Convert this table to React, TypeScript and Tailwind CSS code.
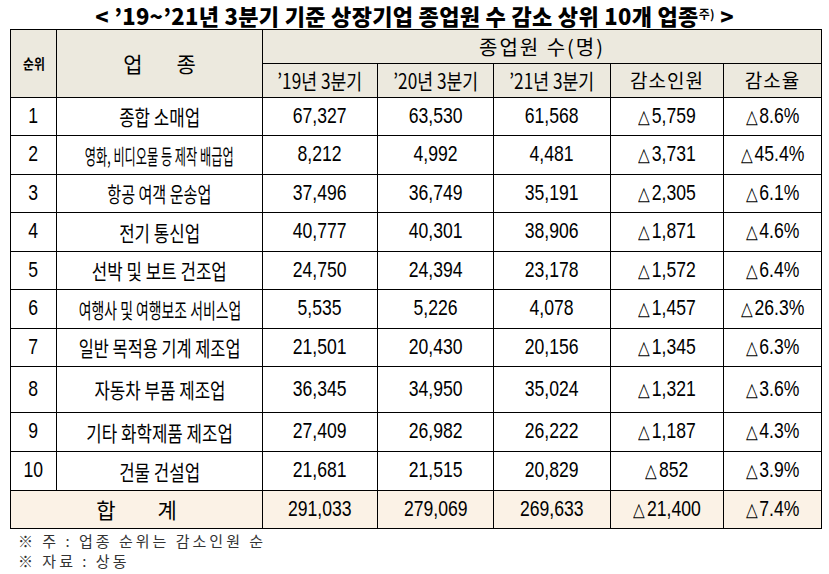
const rows = [
  { rank: '1', name: '종합 소매업', sx: 'scale-x-[0.8]', a: '67,327', b: '63,530', c: '61,568', d: '5,759', e: '8.6%', h: 'h-[38px]' },
  { rank: '2', name: '영화, 비디오물 등 제작 배급업', sx: 'scale-x-[0.58]', a: '8,212', b: '4,992', c: '4,481', d: '3,731', e: '45.4%', h: 'h-[39px]' },
  { rank: '3', name: '항공 여객 운송업', sx: 'scale-x-[0.72]', a: '37,496', b: '36,749', c: '35,191', d: '2,305', e: '6.1%', h: 'h-[38px]' },
  { rank: '4', name: '전기 통신업', sx: 'scale-x-[0.8]', a: '40,777', b: '40,301', c: '38,906', d: '1,871', e: '4.6%', h: 'h-[39px]' },
  { rank: '5', name: '선박 및 보트 건조업', sx: 'scale-x-[0.8]', a: '24,750', b: '24,394', c: '23,178', d: '1,572', e: '6.4%', h: 'h-[38px]' },
  { rank: '6', name: '여행사 및 여행보조 서비스업', sx: 'scale-x-[0.66]', a: '5,535', b: '5,226', c: '4,078', d: '1,457', e: '26.3%', h: 'h-[39px]' },
  { rank: '7', name: '일반 목적용 기계 제조업', sx: 'scale-x-[0.78]', a: '21,501', b: '20,430', c: '20,156', d: '1,345', e: '6.3%', h: 'h-[38px]' },
  { rank: '8', name: '자동차 부품 제조업', sx: 'scale-x-[0.8]', a: '36,345', b: '34,950', c: '35,024', d: '1,321', e: '3.6%', h: 'h-[46px]' },
  { rank: '9', name: '기타 화학제품 제조업', sx: 'scale-x-[0.8]', a: '27,409', b: '26,982', c: '26,222', d: '1,187', e: '4.3%', h: 'h-[39px]' },
  { rank: '10', name: '건물 건설업', sx: 'scale-x-[0.8]', a: '21,681', b: '21,515', c: '20,829', d: '852', e: '3.9%', h: 'h-[39px]' },
]

const kr = "font-['Noto_Sans_CJK_KR',sans-serif]"
const num = "inline-block scale-x-[0.8] font-['Liberation_Sans','Noto_Sans_CJK_KR',sans-serif] text-[22px] leading-none text-black"

const Num = ({ v }: { v: string }) => <span className={num}>{v}</span>

const Delta = ({ v }: { v: string }) => (
  <span className={num}>
    <span className="font-['DejaVu_Sans',sans-serif] text-[19px] font-light mr-[2px]">△</span>
    {v}
  </span>
)

const td = 'border border-black text-center align-middle p-0'

export default function App() {
  return (
    <div className="w-[829px] h-[574px] bg-white overflow-hidden">
      <div className={`h-[29px] flex items-center justify-center ${kr} text-[22px] font-black tracking-[0.3px] text-black leading-none`}>
        <span>
          &lt; ’19~’21년 3분기 기준 상장기업 종업원 수 감소 상위 10개 업종
          <sup className="text-[12px] font-bold">주)</sup> &gt;
        </span>
      </div>

      <table className="ml-[10px] w-[811px] table-fixed border-collapse">
        <colgroup>
          <col className="w-[46px]" />
          <col className="w-[206px]" />
          <col className="w-[115px]" />
          <col className="w-[116px]" />
          <col className="w-[117px]" />
          <col className="w-[113px]" />
          <col className="w-[98px]" />
        </colgroup>
        <thead className={`bg-[#ece9de] ${kr} text-black`}>
          <tr className="h-[34px]">
            <td rowSpan={2} className={`${td} text-[14px] font-bold`}>
              <span className="inline-block scale-x-[0.85]">순위</span>
            </td>
            <td rowSpan={2} className={`${td} text-[21px]`}>
              <span className="inline-flex gap-[34px]">
                <span>업</span>
                <span>종</span>
              </span>
            </td>
            <td colSpan={5} className={`${td} text-[20px] tracking-[2px]`}>
              종업원 수(명)
            </td>
          </tr>
          <tr className="h-[34px]">
            {['’19년 3분기', '’20년 3분기', '’21년 3분기'].map((t) => (
              <td key={t} className={`${td} text-[21px]`}>
                <span className="inline-block scale-x-[0.82] whitespace-nowrap">{t}</span>
              </td>
            ))}
            <td className={`${td} text-[19px] tracking-[1px]`}>감소인원</td>
            <td className={`${td} text-[19px] tracking-[1px]`}>감소율</td>
          </tr>
        </thead>
        <tbody>
          {rows.map((r) => (
            <tr key={r.rank} className={r.h}>
              <td className={td}>
                <Num v={r.rank} />
              </td>
              <td className={`${td} ${kr} text-[21px] leading-none`}>
                <div className="flex justify-center">
                  <span className={`shrink-0 whitespace-nowrap ${r.sx}`}>{r.name}</span>
                </div>
              </td>
              <td className={td}>
                <Num v={r.a} />
              </td>
              <td className={td}>
                <Num v={r.b} />
              </td>
              <td className={td}>
                <Num v={r.c} />
              </td>
              <td className={td}>
                <Delta v={r.d} />
              </td>
              <td className={td}>
                <Delta v={r.e} />
              </td>
            </tr>
          ))}
          <tr className="h-[38px] bg-[#fbf2e6]">
            <td colSpan={2} className={`${td} ${kr} text-[21px]`}>
              <span className="inline-flex gap-[42px]">
                <span>합</span>
                <span>계</span>
              </span>
            </td>
            <td className={td}>
              <Num v="291,033" />
            </td>
            <td className={td}>
              <Num v="279,069" />
            </td>
            <td className={td}>
              <Num v="269,633" />
            </td>
            <td className={td}>
              <Delta v="21,400" />
            </td>
            <td className={td}>
              <Delta v="7.4%" />
            </td>
          </tr>
        </tbody>
      </table>

      <div className={`pl-[18px] pt-[2px] ${kr} text-[15px] leading-[20px] text-[#333] tracking-[3px]`}>
        <p>※ 주 : 업종 순위는 감소인원 순</p>
        <p>※ 자료 : 상동</p>
      </div>
    </div>
  )
}
